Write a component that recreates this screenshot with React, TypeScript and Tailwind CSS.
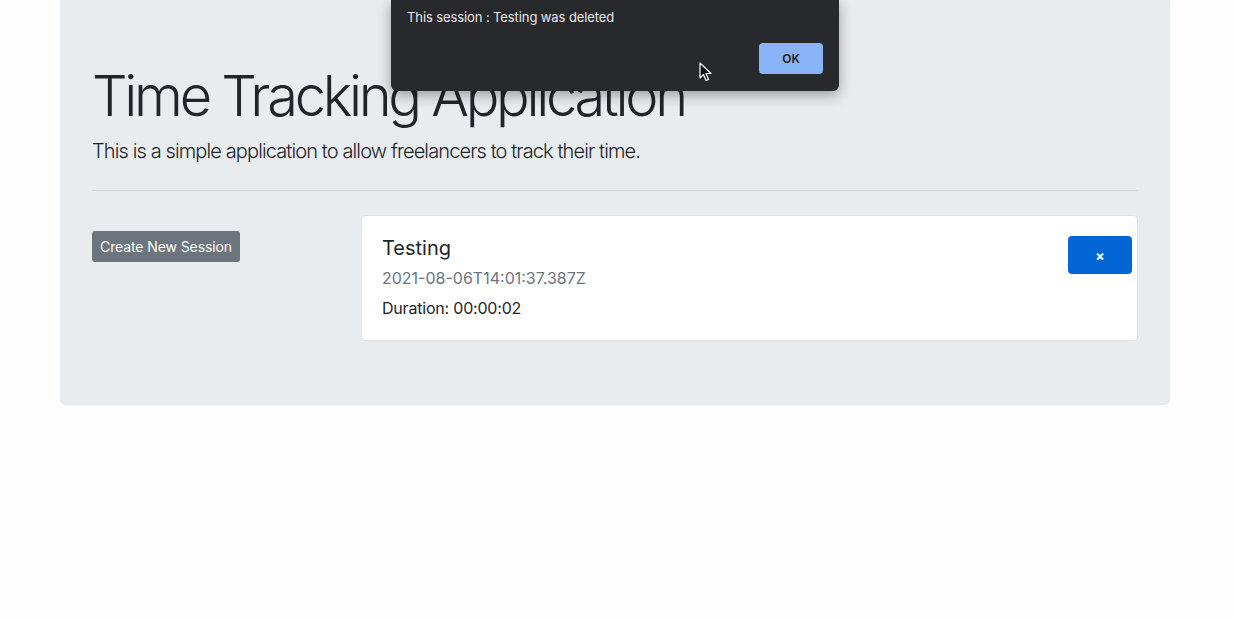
export default function App() {
  const font = { fontFamily: "Inter, 'Liberation Sans', sans-serif" };
  return (
    <div className="relative min-h-[620px] w-full overflow-hidden bg-[#fdfdfd] text-[#212529]" style={font}>
      {/* Jumbotron */}
      <div className="ml-[60px] -mt-[3px] w-[1110px] rounded-[5px] bg-[#e9ecef] px-8 pt-16 pb-16">
        <h1 className="pt-[2px] text-[56px] font-light leading-[1.2] tracking-[-3.3px] text-[#212529]">
          Time Tracking Application
        </h1>
        <p className="mt-[6px] text-[20px] font-light leading-[1.5] tracking-[-0.88px]">
          This is a simple application to allow freelancers to track their time.
        </p>
        <hr className="my-6 border-t border-[#d3d6d9]" />
        <div className="flex">
          <div className="w-[254px] shrink-0 pt-4">
            <button className="h-[31px] rounded-[3px] bg-[#6c757d] px-2 text-[14px] leading-[1.5] tracking-[-0.1px] text-white">
              Create New Session
            </button>
          </div>
          <div className="ml-[15px] flex-1">
            <div className="flex items-start justify-between rounded-[4px] border border-[#dfe1e4] bg-white py-5 pl-5 pr-[5px]">
              <div className="flex flex-col">
                <h5 className="text-[20px] font-normal leading-[1.2]">Testing</h5>
                <div className="mt-[6px] text-[16px] leading-[1.5] text-[#6c757d]">2021-08-06T14:01:37.387Z</div>
                <div className="mt-[6px] text-[16px] leading-[1.5] tracking-[-0.2px]">Duration: 00:00:02</div>
              </div>
              <button className="flex h-[38px] w-[64px] items-center justify-center rounded-[4px] bg-[#0366d6] text-[14px] font-bold text-white">
                ×
              </button>
            </div>
          </div>
        </div>
      </div>

      {/* Alert dialog */}
      <div className="absolute left-[391px] top-0 h-[91px] w-[448px] rounded-b-[6px] bg-[#28292d] shadow-[0_4px_14px_rgba(0,0,0,0.35)]">
        <div className="px-4 pt-[9px] text-[13px] leading-[16px] tracking-[-0.1px] text-[#e8e8e9]">
          This session : Testing was deleted
        </div>
        <div className="mt-[18px] flex justify-end pr-4">
          <button className="h-[31px] w-[64px] rounded-[4px] bg-[#8ab4f8] text-[12px] font-semibold text-[#202124]">
            OK
          </button>
        </div>
      </div>

      {/* Mouse pointer */}
      <svg className="absolute left-[699px] top-[62px]" width="14" height="20" viewBox="0 0 14 20">
        <path d="M1 1 L1 16 L4.5 12.5 L7 18.5 L9.5 17.5 L7 11.5 L12 11.5 Z" fill="#111" stroke="#fff" strokeWidth="1.2" strokeLinejoin="round" />
      </svg>
    </div>
  );
}
